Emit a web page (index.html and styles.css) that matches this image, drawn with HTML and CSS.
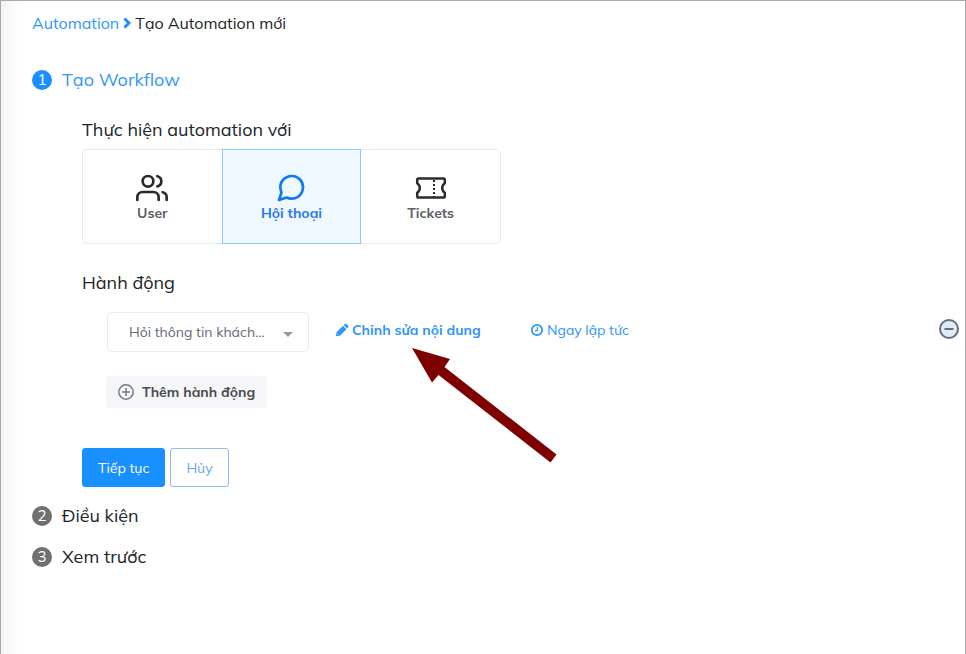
FILE: index.html
```html
<!DOCTYPE html>
<html lang="vi">
<head>
<meta charset="utf-8">
<meta name="viewport" content="width=device-width, initial-scale=1">
<title>Tạo Automation mới</title>
<link rel="stylesheet" href="styles.css">
</head>
<body>
<main class="page">
  <nav class="breadcrumb">
    <a href="#">Automation</a>
    <svg class="chevron" viewBox="0 0 8 12" aria-hidden="true"><path d="M1.500 1.500L6 6l-4.500 4.500"/></svg>
    <span>Tạo Automation mới</span>
  </nav>

  <section class="step step-active">
    <h2 class="step-head"><span class="step-number">1</span>Tạo Workflow</h2>
    <form class="step-body">
      <h3 class="group-title">Thực hiện automation với</h3>
      <div class="targets">
        <button type="button" class="target">
          <svg class="target-icon" viewBox="0 0 24 24" aria-hidden="true"><path d="M17 21v-2a4 4 0 0 0-4-4H5a4 4 0 0 0-4 4v2"/><circle cx="9" cy="7" r="4"/><path d="M23 21v-2a4 4 0 0 0-3-3.870M16 3.130a4 4 0 0 1 0 7.750"/></svg>
          User
        </button>
        <button type="button" class="target target-selected" aria-pressed="true">
          <svg class="target-icon" viewBox="0 0 24 24" aria-hidden="true"><path d="M21 11.500a8.380 8.380 0 0 1-.9 3.800 8.500 8.500 0 0 1-7.600 4.700 8.380 8.380 0 0 1-3.800-.9L3 21l1.900-5.700a8.380 8.380 0 0 1-.9-3.800 8.500 8.500 0 0 1 4.700-7.600 8.380 8.380 0 0 1 3.800-.9h.5a8.480 8.480 0 0 1 8 8v.5z"/></svg>
          Hội thoại
        </button>
        <button type="button" class="target">
          <svg class="target-icon" viewBox="0 0 32 32" aria-hidden="true"><path class="ticket-edge" d="M3.500 6.500h25q1.300 0 1.300 1.300v3.400q-2.600 1.800-2.600 4.800t2.600 4.800v3.400q0 1.300-1.300 1.300h-25q-1.300 0-1.300-1.300v-3.400q2.600-1.800 2.600-4.800t-2.600-4.800V7.800q0-1.300 1.300-1.300z"/><path class="ticket-tear" d="M19 8v17"/></svg>
          Tickets
        </button>
      </div>

      <h3 class="group-title group-title-actions">Hành động</h3>
      <div class="action-row">
        <div class="select-wrap">
          <select class="select" aria-label="Hành động">
            <option>Hỏi thông tin khách...</option>
          </select>
        </div>
        <a class="link link-edit" href="#">
          <svg class="link-icon" viewBox="0 0 14 14" aria-hidden="true"><path fill="currentColor" d="M.8 13.200L1.500 9.300l6.500-6.500 3.500 3.500-6.600 6.500zM8.700 2.100L9.800 1q.8-.7 1.600 0l1.700 1.700q.8.800 0 1.600L12.100 5.400z"/><path fill="none" stroke="#fff" stroke-width=".6" d="M2 10.600l1.500 1.500"/></svg>
          Chỉnh sửa nội dung
          <svg class="pointer" viewBox="0 0 145 116" aria-hidden="true"><path d="M0 0L38 11 32.500 19 144.500 106.500 138.500 114.500 26.500 27 20 34.500z"/></svg>
        </a>
        <a class="link link-time" href="#">
          <svg class="link-icon" viewBox="0 0 14 14" aria-hidden="true"><g fill="none" stroke="currentColor"><circle cx="7" cy="7" r="5.200" stroke-width="1.800"/><path d="M7.300 4v3.600H4.800" stroke-width="1.200"/></g></svg>
          Ngay lập tức
        </a>
        <button type="button" class="remove" aria-label="Xóa hành động">
          <svg viewBox="0 0 20 20" aria-hidden="true"><circle cx="10" cy="10" r="9"/><path d="M5.500 10h9"/></svg>
        </button>
      </div>
      <button type="button" class="add-action">
        <svg viewBox="0 0 16 16" aria-hidden="true"><circle cx="8" cy="8" r="7.200"/><path d="M4 8h8M8 4v8"/></svg>
        Thêm hành động
      </button>
      <div class="buttons">
        <button type="button" class="btn btn-primary">Tiếp tục</button>
        <button type="button" class="btn btn-outline">Hủy</button>
      </div>
    </form>
  </section>

  <section class="step"><h2 class="step-head"><span class="step-number">2</span>Điều kiện</h2></section>
  <section class="step"><h2 class="step-head"><span class="step-number">3</span>Xem trước</h2></section>
</main>
</body>
</html>
```
FILE: styles.css
```css
* { box-sizing: border-box; }

body {
  margin: 0;
  font-family: Mulish, "Open Sans", "Noto Sans", sans-serif;
  font-size: 14px;
  color: #212529;
}

button, select { font: inherit; cursor: pointer; }
a { color: #2f96fb; text-decoration: none; }
svg { flex: none; }

.page {
  min-height: 100vh;
  padding: 10px 6px 24px 31px;
  border: 1px solid #a9a9ab;
  border-bottom: 0;
  background: linear-gradient(to right, #f3f3f4, #fff 18px);
}

.breadcrumb {
  display: flex;
  align-items: center;
  gap: 4px;
  height: 24px;
  margin-bottom: 33px;
  font-size: 16px;
}

.chevron {
  width: 8px;
  height: 12px;
  fill: none;
  stroke: #1890ff;
  stroke-width: 3;
}

.step { margin-bottom: 17px; }

.step-head {
  display: flex;
  align-items: center;
  gap: 10px;
  margin: 0;
  font-size: 18px;
  line-height: 24px;
  font-weight: 400;
}

.step-number {
  display: grid;
  place-items: center;
  width: 20px;
  height: 20px;
  border-radius: 50%;
  background: #707070;
  color: #fff;
  font-size: 15px;
  line-height: 20px;
}

.step-active .step-head { color: #2f96fb; }
.step-active .step-number { background: #1890ff; }

.step-body { padding: 26px 0 0 50px; }

.group-title {
  margin: 0 0 7px;
  font-size: 18px;
  line-height: 24px;
  font-weight: 400;
}

.group-title-actions { margin: 27px 0 17px; }

.targets {
  display: grid;
  grid-template-columns: repeat(3, 1fr);
  max-width: 419px;
  height: 95px;
}

.target {
  display: flex;
  flex-direction: column;
  align-items: center;
  justify-content: center;
  padding: 0;
  border: 1px solid #e2ebf4;
  background: #fff;
  color: #5c5f66;
  font-size: 14px;
  line-height: 18px;
  font-weight: 700;
}

.target:first-child { border-right: 0; border-radius: 5px 0 0 5px; }
.target:last-child { border-left: 0; border-radius: 0 5px 5px 0; }

.target-selected {
  border-color: #8fc8fb;
  background: #f0f8ff;
  color: #2877ee;
}

.target-icon {
  width: 32px;
  height: 32px;
  fill: none;
  stroke: #2b2b2b;
  stroke-width: 2;
  stroke-linecap: round;
  stroke-linejoin: round;
}

.target-selected .target-icon { stroke: #0d7af5; }
.target-icon .ticket-edge { stroke-width: 2.5; }
.target-icon .ticket-tear { stroke-width: 2; stroke-dasharray: 2 2; stroke-linecap: butt; }

.action-row {
  display: flex;
  align-items: center;
  height: 40px;
  padding-left: 25px;
}

.select-wrap {
  position: relative;
  flex: 0 1 202px;
}

.select-wrap::after {
  content: "";
  position: absolute;
  top: 20px;
  right: 16px;
  border: 5px solid transparent;
  border-top-color: #999;
  border-bottom: 0;
  pointer-events: none;
}

.select {
  width: 100%;
  height: 40px;
  padding: 0 32px 0 21px;
  border: 1px solid #e2ebf4;
  border-radius: 5px;
  background: #fff;
  color: #606a75;
  appearance: none;
}

.link {
  position: relative;
  display: flex;
  align-items: center;
  gap: 3px;
  height: 36px;
  align-self: flex-start;
  white-space: nowrap;
}

.link-icon { width: 14px; height: 14px; }
.link-edit { flex: 0 0 146px; margin-left: 26px; font-weight: 700; }
.link-time { margin-left: 49px; }

.pointer {
  position: absolute;
  top: 36px;
  left: 77px;
  width: 145px;
  height: 116px;
  fill: #7f0000;
  pointer-events: none;
}

.remove {
  display: flex;
  margin-left: auto;
  margin-bottom: 6px;
  padding: 0;
  border: 0;
  background: none;
}

.remove svg {
  width: 20px;
  height: 20px;
  fill: #dfebf5;
  stroke: #607080;
  stroke-width: 2;
}

.add-action {
  display: flex;
  align-items: center;
  gap: 8px;
  height: 32px;
  margin: 24px 0 0 24px;
  padding: 0 12px;
  border: 0;
  border-radius: 3px;
  background: #f5f6fa;
  color: #4b4b4d;
  font-weight: 700;
}

.add-action svg {
  width: 16px;
  height: 16px;
  fill: none;
  stroke: #727b87;
  stroke-width: 1.5;
}

.buttons {
  display: flex;
  gap: 5px;
  margin-top: 40px;
}

.btn {
  height: 39px;
  padding: 0 15px;
  border: 1px solid #1890ff;
  border-radius: 3px;
}

.btn-primary { background: #1890ff; color: #fff; }
.btn-outline { border-color: #8fbaf3; background: #fff; color: #68a6ee; }
```
